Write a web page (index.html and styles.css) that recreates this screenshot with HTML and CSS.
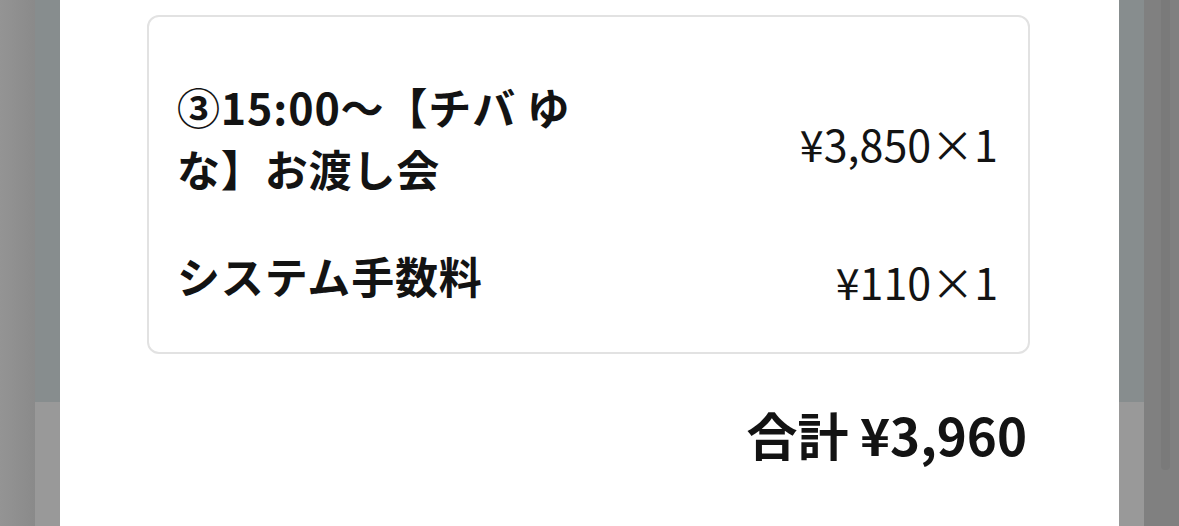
FILE: index.html
```html
<!DOCTYPE html>
<html lang="ja">
<head>
  <meta charset="UTF-8" />
  <meta name="viewport" content="width=device-width, initial-scale=1.0"/>
  <title>購入内容の確認</title>
  <link rel="stylesheet" href="styles.css">
</head>
<body>
  <div class="edge edge-left"></div>
  <div class="gutter">
    <div class="gutter-top"></div>
    <div class="gutter-bottom"></div>
  </div>

  <div class="modal">
    <div class="order">
      <div class="order-row">
        <p class="order-name">③15:00～【チバ ゆな】お渡し会</p>
        <p class="order-price">¥3,850×1</p>
      </div>
      <div class="order-row">
        <p class="order-name">システム手数料</p>
        <p class="order-price">¥110×1</p>
      </div>
    </div>
    <p class="total">合計 ¥3,960</p>
  </div>

  <div class="gutter">
    <div class="gutter-top"></div>
    <div class="gutter-bottom"></div>
  </div>
  <div class="edge edge-right">
    <div class="scrollbar"></div>
  </div>
</body>
</html>
```

FILE: styles.css
```css
html, body {
  height: 100%;
}
body {
  margin: 0;
  display: flex;
  overflow: hidden;
  font-family: "Noto Sans CJK JP", "Noto Sans", sans-serif;
  color: #131313;
  background: #8f8f8f;
  text-spacing-trim: space-all;
}
p {
  margin: 0;
}

/* dimmed page behind the dialog */
.edge {
  width: 35px;
  flex: none;
}
.edge-left {
  background: linear-gradient(to right, #949494, #8a8a8a);
}
.edge-right {
  background: #808080;
  padding-left: 17px;
  box-sizing: border-box;
}
.scrollbar {
  width: 9px;
  height: 470px;
  background: #7a7a7a;
  border-radius: 0 0 4px 4px;
}
.gutter {
  width: 25px;
  flex: none;
  display: flex;
  flex-direction: column;
}
.gutter-top {
  height: 402px;
  background: #878d8e;
}
.gutter-bottom {
  flex: 1;
  background: #999999;
}

/* dialog */
.modal {
  flex: 1;
  background: #fff;
  padding: 15px 89px 0 87px;
}
.order {
  border: 2px solid #e2e2e2;
  border-radius: 12px;
  padding: 40px 30px 40px 28px;
}
.order-row {
  display: flex;
  justify-content: space-between;
  align-items: center;
  padding-top: 18px;
}
.order-row + .order-row {
  margin-top: 21px;
}
.order-name {
  width: 50%;
  font-size: 43px;
  font-weight: bold;
  line-height: 62px;
  letter-spacing: 0.02em;
}
.order-price {
  font-size: 43px;
  line-height: 62px;
  padding-top: 12px;
}
.total {
  margin-top: 43px;
  padding-right: 3px;
  text-align: right;
  font-size: 51px;
  font-weight: bold;
}
```
